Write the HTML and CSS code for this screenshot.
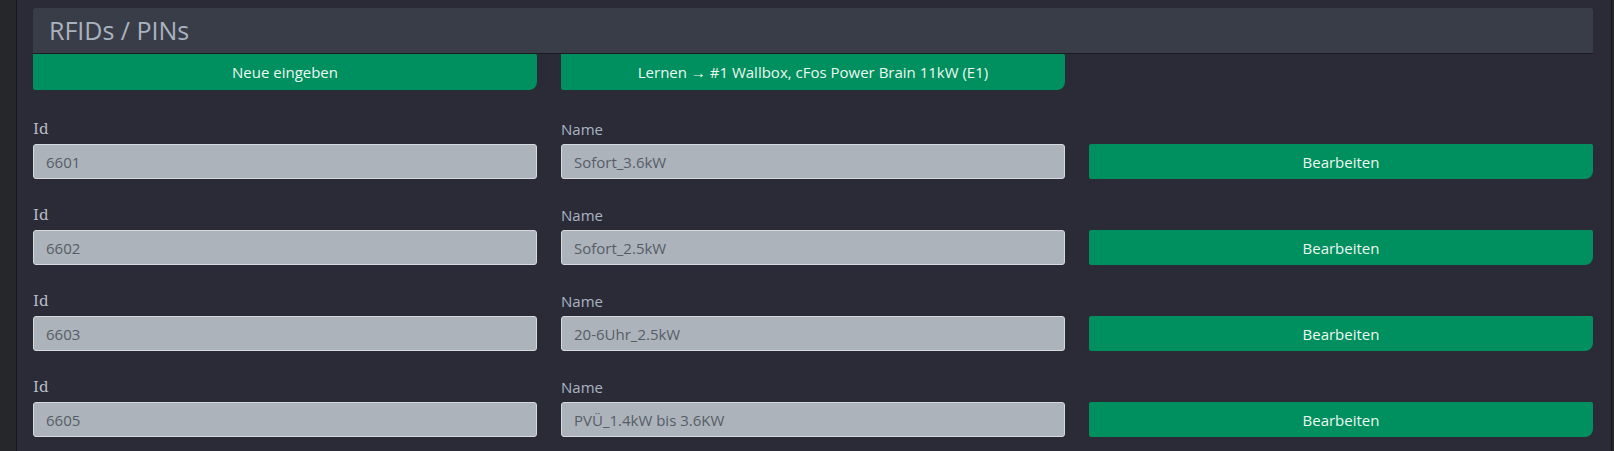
FILE: index.html
```html
<!DOCTYPE html>
<html lang="de">
<head>
    <meta charset="UTF-8">
    <title>RFIDs / PINs</title>
    <link rel="stylesheet" href="styles.css">
</head>
<body>
    <div class="sidebar"></div>
    <div class="main">
        <div class="card-header">RFIDs / PINs</div>

        <div class="grid actions">
            <button class="btn">Neue eingeben</button>
            <button class="btn">Lernen → #1 Wallbox, cFos Power Brain 11kW (E1)</button>
        </div>

        <div class="list">
            <div class="grid rfid-row">
                <div class="field">
                    <label class="label label-id">Id</label>
                    <input class="input" type="text" value="6601" disabled>
                </div>
                <div class="field">
                    <label class="label">Name</label>
                    <input class="input" type="text" value="Sofort_3.6kW" disabled>
                </div>
                <button class="btn">Bearbeiten</button>
            </div>
            <div class="grid rfid-row">
                <div class="field">
                    <label class="label label-id">Id</label>
                    <input class="input" type="text" value="6602" disabled>
                </div>
                <div class="field">
                    <label class="label">Name</label>
                    <input class="input" type="text" value="Sofort_2.5kW" disabled>
                </div>
                <button class="btn">Bearbeiten</button>
            </div>
            <div class="grid rfid-row">
                <div class="field">
                    <label class="label label-id">Id</label>
                    <input class="input" type="text" value="6603" disabled>
                </div>
                <div class="field">
                    <label class="label">Name</label>
                    <input class="input" type="text" value="20-6Uhr_2.5kW" disabled>
                </div>
                <button class="btn">Bearbeiten</button>
            </div>
            <div class="grid rfid-row">
                <div class="field">
                    <label class="label label-id">Id</label>
                    <input class="input" type="text" value="6605" disabled>
                </div>
                <div class="field">
                    <label class="label">Name</label>
                    <input class="input" type="text" value="PVÜ_1.4kW bis 3.6KW" disabled>
                </div>
                <button class="btn">Bearbeiten</button>
            </div>
        </div>
    </div>
    <div class="edge"></div>
</body>
</html>
```

FILE: styles.css
```css
body {
    margin: 0;
    height: 100vh;
    display: flex;
    overflow: hidden;
    background-color: #2b2b37;
    font-family: 'Open Sans', 'Noto Sans', sans-serif;
    font-size: 15px;
    color: #adb5c0;
}
.sidebar {
    width: 16px;
    background-color: #25272b;
    border-right: 1px solid #18181c;
}
.edge {
    width: 2px;
    background-color: #25272b;
    border-left: 1px solid #18181c;
}
.main {
    flex: 1;
    padding: 8px 18px 0 16px;
}
.card-header {
    height: 45px;
    line-height: 44px;
    padding-left: 16px;
    background-color: #393d48;
    border-bottom: 1px solid #1c1d23;
    border-radius: 3px 3px 0 0;
    font-size: 25px;
    color: #a9b3c0;
}
.grid {
    display: grid;
    grid-template-columns: repeat(3, 1fr);
    column-gap: 24px;
}
.btn {
    height: 36px;
    padding: 0 12px;
    border: none;
    border-radius: 0 2px 8px 2px;
    background-color: #008f5e;
    color: #eef7f2;
    font-family: 'Open Sans', 'Noto Sans', sans-serif;
    font-size: 15px;
    cursor: pointer;
}
.list {
    padding-top: 3px;
}
.rfid-row {
    margin-top: 26px;
    align-items: end;
}
.rfid-row .btn {
    height: 35px;
    border-radius: 2px 2px 8px 2px;
}
.field {
    display: flex;
    flex-direction: column;
}
.label {
    line-height: 21px;
    margin-bottom: 4px;
    color: #a9b4c2;
}
.label-id {
    font-family: 'DejaVu Serif', serif;
    font-size: 15px;
    color: #b8bec6;
}
.input {
    box-sizing: border-box;
    height: 35px;
    padding: 0 12px;
    border: 1px solid #d6dadf;
    border-radius: 3px;
    background-color: #adb3ba;
    color: #565d68;
    font-family: 'Open Sans', 'Noto Sans', sans-serif;
    font-size: 15px;
}
```
